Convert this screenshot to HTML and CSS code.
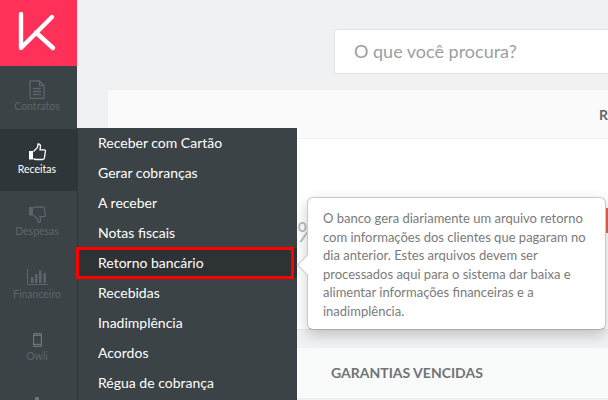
FILE: index.html
```html
<!DOCTYPE html>
<html lang="pt-BR">
<head>
<meta charset="utf-8">
<title>Retorno bancário</title>
<link rel="stylesheet" href="styles.css">
</head>
<body>
<div class="app">
  <nav class="sidebar">
    <div class="logo">
      <svg width="77" height="66" viewBox="0 0 77 66"><path d="M21 14V48L52 17M36 32.500 53 48" fill="none" stroke="#fff" stroke-width="4.400" stroke-linecap="round" stroke-linejoin="round"/></svg>
    </div>
    <a class="nav-item">
      <span class="icon-slot"><svg width="16" height="19" viewBox="0 0 16 19"><path d="M1 1h9.500l4.500 4.500v12q0 .9-.9.900H1.900q-.9 0-.9-.9zM10.500 1v4.500H15M4 8.500h8M4 11.500h8M4 14.500h8" fill="none" stroke="#5b666d" stroke-width="1.300"/></svg></span>
      <span>Contratos</span>
    </a>
    <a class="nav-item active">
      <span class="icon-slot"><svg width="18" height="18" viewBox="0 0 18 18"><path d="M1 8h4v8.500H1z" fill="#fff"/><path d="M5.500 8.500 9.500 4.500 10 1q2.500 0 2.500 2.500L12 6.800h4.200q1.300 0 1.200 1.600l-1 6.600q-.2 1.500-1.700 1.500H8q-1.500 0-2.500-1" fill="none" stroke="#fff" stroke-width="1.300"/></svg></span>
      <span>Receitas</span>
    </a>
    <a class="nav-item">
      <span class="icon-slot"><svg width="18" height="19" viewBox="0 0 18 19"><path d="M1 2h4v8.500H1z" fill="#5b666d"/><path d="M5.500 10 9.500 14 10 17.500q2.500 0 2.500-2.500L12 11.700h4.200q1.300 0 1.200-1.600l-1-6.600Q16.200 2 14.700 2H8q-1.500 0-2.500 1" fill="none" stroke="#5b666d" stroke-width="1.300"/></svg></span>
      <span>Despesas</span>
    </a>
    <a class="nav-item">
      <span class="icon-slot"><svg width="21" height="16" viewBox="0 0 21 16"><path d="M.5 0v15.500H21" fill="none" stroke="#5b666d" stroke-width="1"/><path d="M4 8h2.500v6H4zM8 5h2.500v9H8zM12 1.500h2.500V14H12zM16.500 4H19v10h-2.500z" fill="#5b666d"/></svg></span>
      <span>Financeiro</span>
    </a>
    <a class="nav-item">
      <span class="icon-slot"><svg width="9" height="14" viewBox="0 0 9 14"><path d="M1.500.6h6q.9 0 .9.900v11q0 .9-.9.900h-6q-.9 0-.9-.9v-11q0-.9.900-.9zM.6 2.300h7.800M.6 11.300h7.800" fill="none" stroke="#6b767c" stroke-width="1.200"/></svg></span>
      <span>Owli</span>
    </a>
    <a class="nav-item">
      <span class="icon-slot"><svg width="12" height="10" viewBox="0 0 12 10"><path d="M4 0h4v4h4v6H0V4h4z" fill="#6b767c"/></svg></span>
    </a>
  </nav>
  <ul class="submenu">
    <li>Receber com Cartão</li>
    <li>Gerar cobranças</li>
    <li>A receber</li>
    <li>Notas fiscais</li>
    <li class="current">Retorno bancário</li>
    <li>Recebidas</li>
    <li>Inadimplência</li>
    <li>Acordos</li>
    <li>Régua de cobrança</li>
  </ul>
  <main class="content">
    <div class="search">O que você procura?</div>
    <section class="panel">
      <div class="panel-head"><span class="head-letter">R</span></div>
      <div class="panel-body"><span class="peek">%</span><span class="side-bar"></span></div>
    </section>
    <section class="panel second">
      <span class="second-title">GARANTIAS VENCIDAS</span>
    </section>
  </main>
  <div class="tooltip">O banco gera diariamente um arquivo retorno com informações dos clientes que pagaram no dia anterior. Estes arquivos devem ser processados aqui para o sistema dar baixa e alimentar informações financeiras e a inadimplência.</div>
</div>
</body>
</html>
```
FILE: styles.css
```css
*, *::before, *::after { box-sizing: border-box; }
html, body { margin: 0; height: 100%; overflow: hidden; }
body { font-family: Lato, sans-serif; background: #f0f1f3; }
.app { position: relative; display: flex; width: 608px; height: 400px; overflow: hidden; }
.sidebar { width: 77px; flex: none; background: #3b4346; display: flex; flex-direction: column; overflow: hidden; }
.logo { height: 66px; flex: none; background: #ff3158; }
.logo svg { display: block; }
.nav-item { height: 62.500px; flex: none; display: flex; flex-direction: column; align-items: center; padding: 14px 3px 0 0; gap: 1px; font-size: 10.500px; line-height: 12px; color: #5b666d; }
.icon-slot { height: 19px; display: flex; align-items: center; justify-content: center; }
.nav-item.active { background: #2f3639; color: #fff; }
.submenu { position: absolute; z-index: 2; left: 77px; top: 128px; width: 220px; height: 272px; margin: 0; padding: 0; list-style: none; background: #3b4346; border-left: 1px solid #2f3639; }
.submenu li { height: 30px; padding-left: 20px; font-size: 14px; line-height: 30px; color: #fff; }
.submenu li.current { position: relative; background: #2d3335; }
.submenu li.current::after { content: ""; position: absolute; left: -2px; top: -1px; width: 218px; height: 32px; border: 3px solid #f00; }
.content { flex: 1; padding: 29px 0 0 31px; min-width: 0; }
.search { margin-left: 226px; width: 300px; height: 45px; background: #fff; border: 1px solid #e3e4e6; border-right: 0; border-radius: 3px 0 0 3px; padding-left: 19px; font-size: 18px; line-height: 42px; color: #9b9ea3; }
.panel { margin-top: 16px; width: 500px; background: #fff; }
.panel-head { height: 49px; background: #fafafa; border-bottom: 1px solid #f0f1f3; padding: 14px 0 0 491px; }
.head-letter { font-size: 14px; font-weight: 700; color: #666; }
.panel-body { position: relative; height: 191px; border-bottom: 1px solid #e8e9eb; }
.panel.second { margin-top: 18px; height: 51px; background: #f9fafa; border-bottom: 1px solid #eceef2; padding: 14px 0 0 223px; }
.second-title { font-size: 14px; font-weight: 700; color: #6f7377; white-space: nowrap; }
.peek { position: absolute; left: 189px; top: 78px; font-size: 26px; line-height: 30px; color: #b9bcbf; }
.side-bar { position: absolute; right: 0; top: 69px; width: 3px; height: 25px; background: #e2654f; }
.tooltip { position: absolute; z-index: 3; left: 307px; top: 197px; width: 299px; height: 133px; background: #fff; border: 1px solid #c8c9cb; border-bottom-color: #a9abad; border-radius: 6px; padding: 11px 15px; font-size: 13px; line-height: 18.570px; color: #7a7a7a; box-shadow: 0 5px 14px rgba(0,0,0,.2); }
.tooltip::before { content: ""; position: absolute; left: -8px; top: 59px; width: 16px; height: 16px; background: #fff; border-left: 1px solid #c8c9cb; border-bottom: 1px solid #c8c9cb; transform: rotate(45deg); }
```
